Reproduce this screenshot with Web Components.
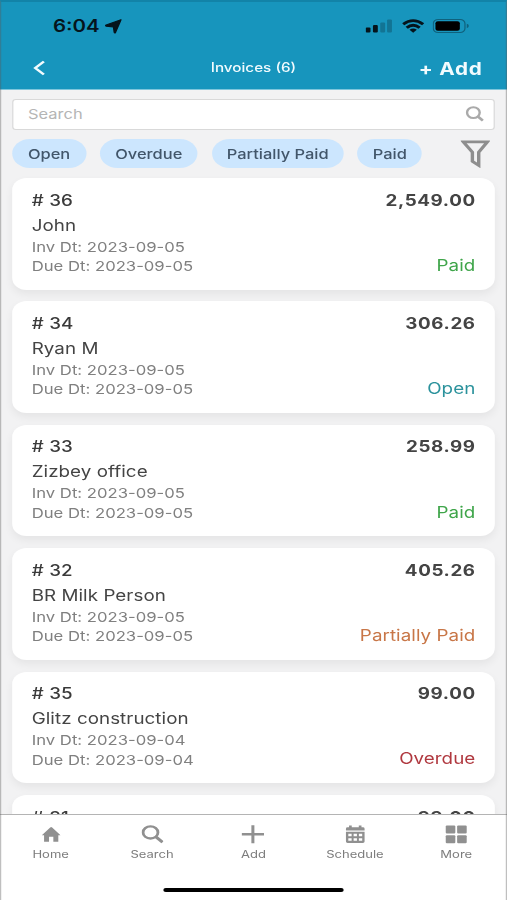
<!DOCTYPE html>
<html lang="en">
<head>
<meta charset="utf-8">
<title>Invoices</title>
<style>
    body {
        margin: 0;
        overflow: hidden;
        background: #f2f2f3;
        font-family: Inter, "Liberation Sans", sans-serif;
    }
</style>
</head>
<body>
<invoice-app>
    <status-bar slot="top" time="6:04"></status-bar>
    <title-bar slot="top" action="+ Add">Invoices (6)</title-bar>

    <search-box placeholder="Search"></search-box>
    <filter-row>
        <filter-chip style="width: 60.5px">Open</filter-chip>
        <filter-chip style="width: 80.5px">Overdue</filter-chip>
        <filter-chip style="width: 108.5px">Partially Paid</filter-chip>
        <filter-chip style="width: 53px">Paid</filter-chip>
    </filter-row>
    <invoice-list>
        <invoice-card number="36" amount="2,549.00" invoiced="2023-09-05" due="2023-09-05" status="Paid">John</invoice-card>
        <invoice-card number="34" amount="306.26" invoiced="2023-09-05" due="2023-09-05" status="Open">Ryan M</invoice-card>
        <invoice-card number="33" amount="258.99" invoiced="2023-09-05" due="2023-09-05" status="Paid">Zizbey office</invoice-card>
        <invoice-card number="32" amount="405.26" invoiced="2023-09-05" due="2023-09-05" status="Partially Paid">BR Milk Person</invoice-card>
        <invoice-card number="35" amount="99.00" invoiced="2023-09-04" due="2023-09-04" status="Overdue">Glitz construction</invoice-card>
        <invoice-card number="31" amount="99.00"></invoice-card>
    </invoice-list>

    <tab-bar slot="bottom">
        <tab-item icon="home">Home</tab-item>
        <tab-item icon="search">Search</tab-item>
        <tab-item icon="add">Add</tab-item>
        <tab-item icon="schedule">Schedule</tab-item>
        <tab-item icon="more">More</tab-item>
    </tab-bar>
</invoice-app>

<script>
// invoice-app: the screen is laid out 416px wide and widened to 507px
class InvoiceApp extends HTMLElement {
    constructor() {
        super();
        this.attachShadow({ mode: 'open' });
    }

    connectedCallback() {
        this.shadowRoot.innerHTML = `
            <style>
            :host {
                display: flex;
                flex-direction: column;
                position: relative;

                width: 416px;
                height: 900px;

                overflow: hidden;
                transform: scaleX(1.21875);
                transform-origin: 0 0;
            }

            :host::after {
                content: "";
                position: absolute;
                inset: 0;

                border: solid rgb(90 90 90 / 0.38);
                border-width: 2px 0.9px 0 1.4px;
                border-top-color: rgb(0 60 90 / 0.2);
                pointer-events: none;
            }

            header {
                height: 90px;

                background: #1795bd;
                box-sizing: border-box;
                border-bottom: 1px solid #7fc6dc;
            }

            main {
                flex: 1;
                min-height: 0;

                padding: 9px 10px 0;

                overflow: hidden;
            }
            </style>
            <header><slot name="top"></slot></header>
            <main><slot></slot></main>
            <slot name="bottom"></slot>
          `;
    }
}

class StatusBar extends HTMLElement {
    constructor() {
        super();
        this.attachShadow({ mode: 'open' });
    }

    connectedCallback() {
        this.shadowRoot.innerHTML = `
            <style>
            :host {
                display: flex;
                align-items: center;

                height: 52px;
                padding: 0 31px 0 43.5px;

                color: #05141c;
            }

            time {
                font-size: 16.8px;
                font-weight: 600;
                line-height: 20px;
            }

            svg {
                display: block;
            }

            .arrow {
                margin-left: 4.5px;
            }

            .signal {
                margin-left: auto;
            }

            .wifi {
                margin: 0 7px 0 8px;
            }
            </style>
            <time>${this.getAttribute("time")}</time>
            <svg class="arrow" width="14" height="15" viewBox="0 0 15 15" preserveAspectRatio="none">
              <path d="M14.2 .7 9.4 13.4Q8.8 14.5 8.3 13.3L7.6 8 1.3 7.2Q.2 6.8 1.2 6Z" fill="currentColor" stroke="currentColor" stroke-width="1.2" stroke-linejoin="round"/>
            </svg>
            <svg class="signal" width="22" height="14" viewBox="0 0 22 14" fill="currentColor">
              <rect x="0" y="8.6" width="4" height="5" rx="1"/>
              <rect x="6" y="6" width="4" height="7.6" rx="1"/>
              <rect x="12" y="3.4" width="4" height="10.2" rx="1" opacity=".25"/>
              <rect x="17.6" y=".6" width="4" height="13" rx="1" opacity=".25"/>
            </svg>
            <svg class="wifi" width="18" height="14" viewBox="0 0 18 14" fill="none" stroke="currentColor" stroke-width="2.7">
              <path d="M.8 5.2Q9-2 17.2 5.2M3.7 8.8Q9 3.7 14.3 8.8"/>
              <path d="M9 13.8 6 10.7Q9 8.4 12 10.7Z" fill="currentColor" stroke="none"/>
            </svg>
            <svg width="30" height="14" viewBox="0 0 30 14">
              <rect x=".5" y=".5" width="26" height="13" rx="4" fill="none" stroke="currentColor" opacity=".4"/>
              <rect x="2.3" y="2.2" width="20" height="9.6" rx="2" fill="#000"/>
              <path d="M28 4.8v4.4q1.7-.6 1.7-2.2t-1.7-2.2Z" fill="currentColor" opacity=".4"/>
            </svg>
          `;
    }
}

class TitleBar extends HTMLElement {
    constructor() {
        super();
        this.attachShadow({ mode: 'open' });
    }

    connectedCallback() {
        this.shadowRoot.innerHTML = `
            <style>
            :host {
                display: grid;
                grid-template-columns: 1fr auto 1fr;
                align-items: center;

                height: 31px;
                padding: 0 20.5px;

                color: #f2fbfe;
            }

            svg {
                display: block;
                margin-left: 6.5px;
            }

            h1 {
                margin: 0 0 1px;

                font-size: 12.5px;
                font-weight: 500;
            }

            span {
                justify-self: end;

                margin-top: 2px;
                margin-right: -0.5px;

                font-size: 17px;
                font-weight: 700;
                letter-spacing: 0.6px;
            }
            </style>
            <svg width="12" height="16" viewBox="0 0 12 16" fill="none" stroke="currentColor" stroke-width="2.3">
              <path d="M9 1.5 2 8l7 6.5"/>
            </svg>
            <h1><slot></slot></h1>
            <span>${this.getAttribute("action")}</span>
          `;
    }
}

class SearchBox extends HTMLElement {
    constructor() {
        super();
        this.attachShadow({ mode: 'open' });
    }

    connectedCallback() {
        this.shadowRoot.innerHTML = `
            <style>
            :host {
                display: flex;
                align-items: center;
                justify-content: space-between;

                box-sizing: border-box;
                height: 31px;
                padding: 0 8px 1px 12px;

                background: white;
                border: 1px solid #d9d9d9;
                border-radius: 3px;

                color: #b5b5b5;
                font-size: 13.5px;
            }
            </style>
            <span>${this.getAttribute("placeholder")}</span>
            <svg width="15" height="15.5" viewBox="0 0 15 15" preserveAspectRatio="none" fill="none" stroke="#aaa" stroke-width="2">
              <circle cx="6.4" cy="6.4" r="5.2"/>
              <path d="M10 10l4.2 4.2" stroke-width="2.4"/>
            </svg>
          `;
    }
}

class FilterRow extends HTMLElement {
    constructor() {
        super();
        this.attachShadow({ mode: 'open' });
    }

    connectedCallback() {
        this.shadowRoot.innerHTML = `
            <style>
            :host {
                display: flex;
                align-items: center;
                gap: 11.3px;

                height: 29px;
                margin: 9px 0 10px;
            }

            svg {
                margin: 0 4.5px 0 auto;
            }
            </style>
            <slot></slot>
            <svg width="24" height="28" viewBox="0 0 24 28" fill="none" stroke="#8e8e8e" stroke-width="2.8">
              <path d="M2.1 1.8H21.9L14.8 12.2V25.4L9.6 21.4V12.2Z"/>
            </svg>
          `;
    }
}

class FilterChip extends HTMLElement {
    constructor() {
        super();
        this.attachShadow({ mode: 'open' });
    }

    connectedCallback() {
        this.shadowRoot.innerHTML = `
            <style>
            :host {
                display: flex;
                align-items: center;
                justify-content: center;

                height: 29px;

                background: #cce6fe;
                border-radius: 15px;

                color: #42566a;
                font-size: 13.5px;
                font-weight: 450;
                white-space: nowrap;
            }
            </style>
            <slot></slot>
          `;
    }
}

class InvoiceList extends HTMLElement {
    constructor() {
        super();
        this.attachShadow({ mode: 'open' });
    }

    connectedCallback() {
        this.shadowRoot.innerHTML = `
            <style>
            :host {
                display: flex;
                flex-direction: column;
                gap: 11.9px;
            }
            </style>
            <slot></slot>
          `;
    }
}

const STATUS_COLORS = {
    'Paid': '#3fa54a',
    'Open': '#2b929c',
    'Partially Paid': '#c87647',
    'Overdue': '#b0383f'
};

class InvoiceCard extends HTMLElement {
    constructor() {
        super();
        this.attachShadow({ mode: 'open' });
    }

    connectedCallback() {
        const status = this.getAttribute("status");

        this.shadowRoot.innerHTML = `
            <style>
            :host {
                display: flex;
                justify-content: space-between;

                box-sizing: border-box;
                height: 111.5px;
                padding: 10.6px 16px 11.7px;

                background: white;
                border-radius: 12px;
                box-shadow: 0 4px 8px rgb(0 0 0 / 0.06);

                color: #444;
                font-size: 15.4px;
            }

            .column {
                display: flex;
                flex-direction: column;
            }

            .right {
                align-items: flex-end;
                justify-content: space-between;
            }

            .number {
                color: #3a3a3a;
                line-height: 24px;
                font-weight: 500;
                word-spacing: 0.5px;
            }

            .name {
                line-height: 25px;
                letter-spacing: 0.05px;
            }

            .date {
                color: #808080;
                font-size: 13.7px;
                line-height: 19.4px;
            }

            .amount {
                line-height: 24px;
                font-weight: 700;
                letter-spacing: 0.5px;
                margin-right: -0.3px;
            }

            .status {
                color: ${STATUS_COLORS[status] || 'inherit'};
                line-height: 24px;
                letter-spacing: 0.05px;
            }
            </style>
            <div class="column">
              <span class="number"># ${this.getAttribute("number")}</span>
              <span class="name"><slot></slot></span>
              ${status ? `
              <span class="date">Inv Dt: ${this.getAttribute("invoiced")}</span>
              <span class="date">Due Dt: ${this.getAttribute("due")}</span>` : ''}
            </div>
            <div class="column right">
              <span class="amount">${this.getAttribute("amount")}</span>
              ${status ? `<span class="status">${status}</span>` : ''}
            </div>
          `;
    }
}

class TabBar extends HTMLElement {
    constructor() {
        super();
        this.attachShadow({ mode: 'open' });
    }

    connectedCallback() {
        this.shadowRoot.innerHTML = `
            <style>
            :host {
                display: flex;
                flex-direction: column;
                align-items: center;

                box-sizing: border-box;
                height: 86px;

                background: white;
                border-top: 1px solid #b4b4b4;
            }

            nav {
                display: grid;
                grid-template-columns: repeat(5, 1fr);

                width: 100%;
                height: 72.5px;
            }

            .indicator {
                width: 148px;
                height: 4.6px;

                background: black;
                border-radius: 3px;
            }
            </style>
            <nav><slot></slot></nav>
            <div class="indicator"></div>
          `;
    }
}

// each icon fills its own width, the height is always 20 units
const ICONS = {
    home: { width: 16, body: '<path d="M10 2.2Q10.4 2.2 11 2.8L19.6 11H17.3V18.2H12.2V12.8H7.8V18.2H2.7V11H.4L9 2.8Q9.6 2.2 10 2.2Z"/>' },
    search: { width: 18.5, body: '<g fill="none" stroke="currentColor"><circle cx="8.1" cy="8" r="6.6" stroke-width="2.5"/><path d="M12.8 12.6l6 6" stroke-width="3"/></g>' },
    add: { width: 19, body: '<path d="M8.7 .4h2.6v8.300h8.300v2.600h-8.300v8.300H8.700v-8.300H.4V8.700h8.300Z"/>' },
    schedule: { width: 17, body: '<path fill-rule="evenodd" d="M4 .5h2.6v2h6.800v-2H16v2h1.4q1.6 0 1.6 1.6V6H1V4.1Q1 2.5 2.6 2.5H4ZM1 7.4h18v10.5q0 1.6-1.6 1.6H2.6Q1 19.500 1 17.9ZM3.3 9.4v2.8h3.2V9.4Zm5.1 0v2.8h3.2V9.4Zm5.1 0v2.8h3.2V9.4ZM3.3 14.2V17h3.2v-2.8Zm5.1 0V17h3.2v-2.8Zm5.1 0V17h3.2v-2.8Z"/>' },
    more: { width: 18.5, body: '<rect x=".8" y=".6" width="8.5" height="8.5" rx="1"/><rect x="10.9" y=".6" width="8.5" height="8.5" rx="1"/><rect x=".8" y="11.2" width="8.5" height="8.5" rx="1"/><rect x="10.9" y="11.2" width="8.5" height="8.5" rx="1"/>' }
};

class TabItem extends HTMLElement {
    constructor() {
        super();
        this.attachShadow({ mode: 'open' });
    }

    connectedCallback() {
        const icon = ICONS[this.getAttribute("icon")];

        this.shadowRoot.innerHTML = `
            <style>
            :host {
                display: flex;
                flex-direction: column;
                align-items: center;
                gap: 4.5px;

                padding-top: 10px;

                color: #909090;
                font-size: 10.7px;
                line-height: 14px;
            }

            span {
                color: #7c7c7c;
            }
            </style>
            <svg width="${icon.width}" height="18.5" viewBox="0 0 20 20" preserveAspectRatio="none" fill="currentColor">${icon.body}</svg>
            <span><slot></slot></span>
          `;
    }
}

customElements.define('invoice-app', InvoiceApp);
customElements.define('status-bar', StatusBar);
customElements.define('title-bar', TitleBar);
customElements.define('search-box', SearchBox);
customElements.define('filter-row', FilterRow);
customElements.define('filter-chip', FilterChip);
customElements.define('invoice-list', InvoiceList);
customElements.define('invoice-card', InvoiceCard);
customElements.define('tab-bar', TabBar);
customElements.define('tab-item', TabItem);
</script>
</body>
</html>
